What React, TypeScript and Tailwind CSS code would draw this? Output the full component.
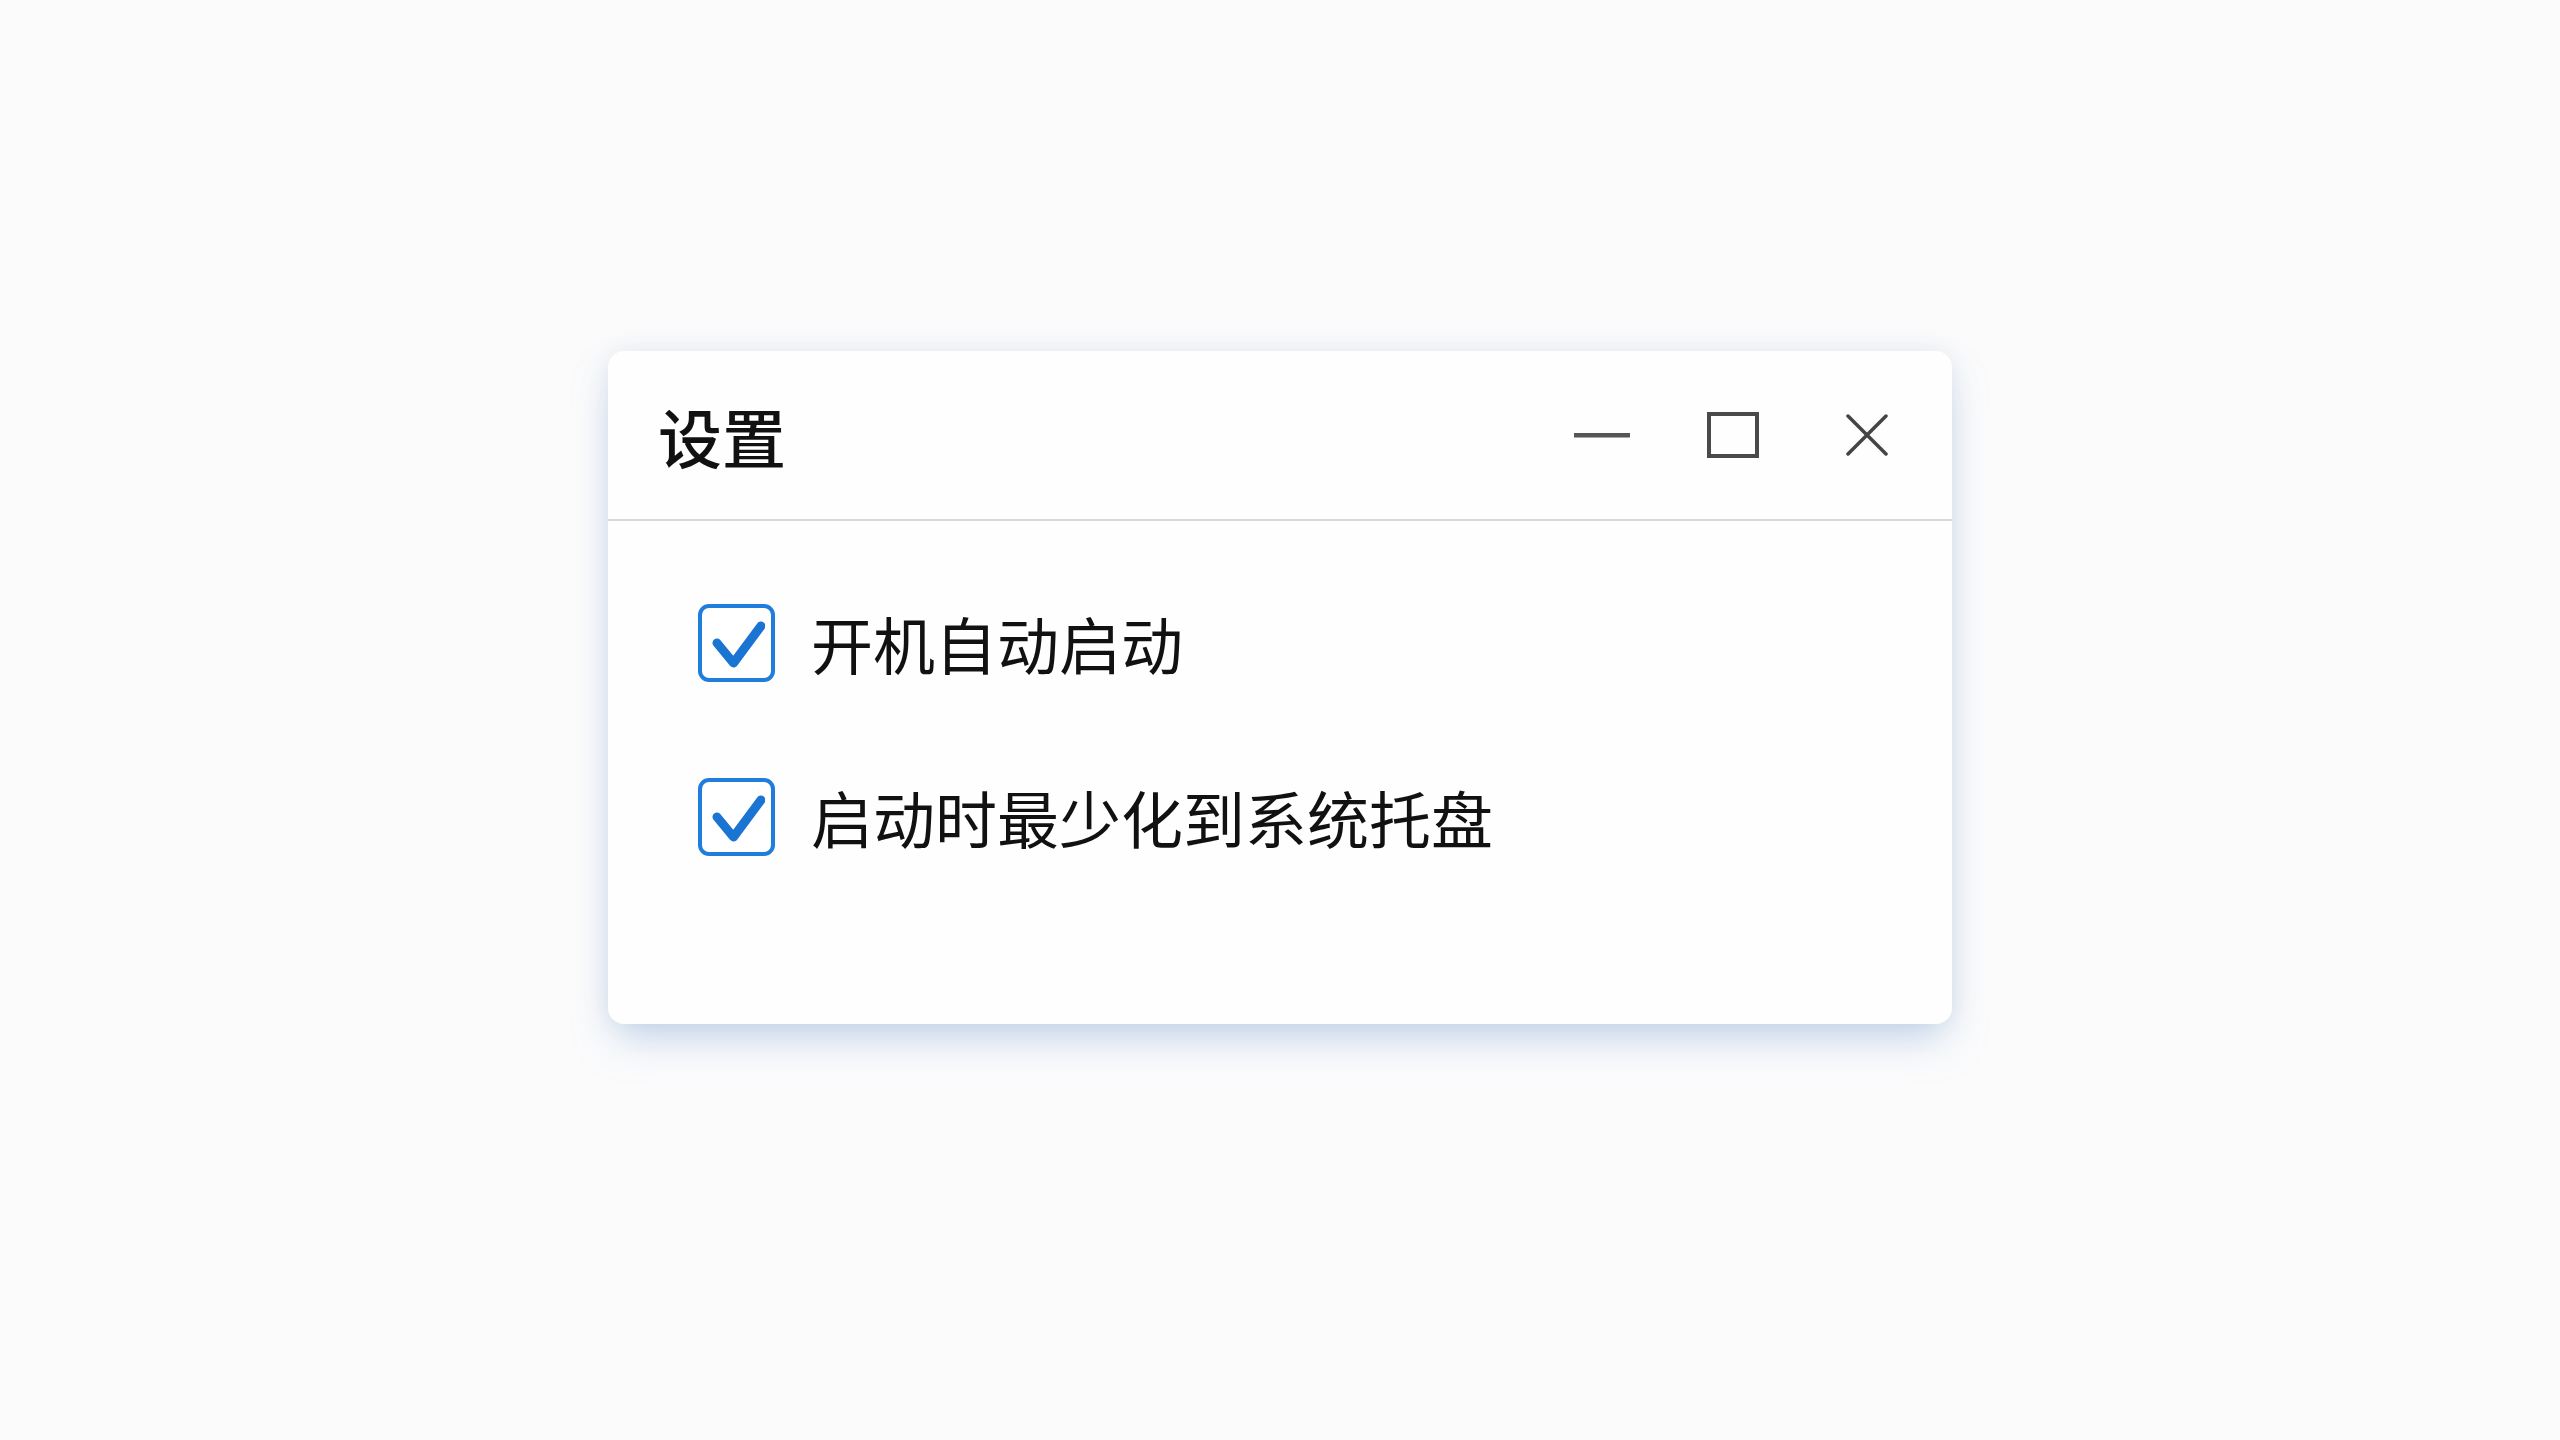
import type React from 'react'

const font = {
  fontFamily: '"Noto Sans CJK SC", "Noto Sans", sans-serif',
}

const CheckBox = () => (
  <div className="flex h-[78px] w-[77px] shrink-0 items-center justify-center rounded-[11px] border-[4px] border-[#1f7ddc] bg-white">
    <svg width="56" height="56" viewBox="0 0 56 56" fill="none">
      <path
        d="M8 28 L24.5 48 L52 11"
        stroke="#1a74d2"
        strokeWidth="9"
        strokeLinecap="round"
        strokeLinejoin="round"
      />
    </svg>
  </div>
)

const options = ['开机自动启动', '启动时最少化到系统托盘']

const App: React.FC = () => {
  return (
    <div
      className="flex min-h-screen w-full justify-center bg-[#fbfbfc] pt-[351px]"
      style={font}
    >
      <div className="flex h-[673px] w-[1344px] flex-col rounded-2xl bg-[#fefefe] shadow-[0_22px_40px_-10px_rgba(150,180,220,0.55),0_0_26px_rgba(190,200,215,0.35)]">
        {/* 标题栏 */}
        <div className="flex h-[170px] shrink-0 items-center justify-between border-b-2 border-[#d8d8d8] pl-[50px] pr-[64px]">
          <span className="text-[64px] font-medium leading-none text-[#111]">
            设置
          </span>
          <div className="flex items-center">
            <button className="flex h-[60px] w-[56px] items-center justify-center">
              <svg width="56" height="5" viewBox="0 0 56 5">
                <rect x="0" y="0" width="56" height="4.5" fill="#555" />
              </svg>
            </button>
            <button className="ml-[77px] flex h-[60px] w-[52px] items-center justify-center">
              <svg width="52" height="46" viewBox="0 0 52 46" fill="none">
                <rect
                  x="2"
                  y="2"
                  width="48"
                  height="42"
                  stroke="#4a4a4a"
                  strokeWidth="4"
                />
              </svg>
            </button>
            <button className="ml-[87px] flex h-[60px] w-[42px] items-center justify-center">
              <svg width="42" height="42" viewBox="0 0 42 42" fill="none">
                <path
                  d="M2 2 L40 40 M40 2 L2 40"
                  stroke="#444"
                  strokeWidth="3.5"
                  strokeLinecap="round"
                />
              </svg>
            </button>
          </div>
        </div>

        {/* 选项 */}
        <div className="flex flex-col gap-[96px] pl-[90px] pt-[83px]">
          {options.map((label) => (
            <label key={label} className="flex items-center gap-[36px]">
              <CheckBox />
              <span className="text-[62px] leading-none text-[#111]">
                {label}
              </span>
            </label>
          ))}
        </div>
      </div>
    </div>
  )
}

export default App
